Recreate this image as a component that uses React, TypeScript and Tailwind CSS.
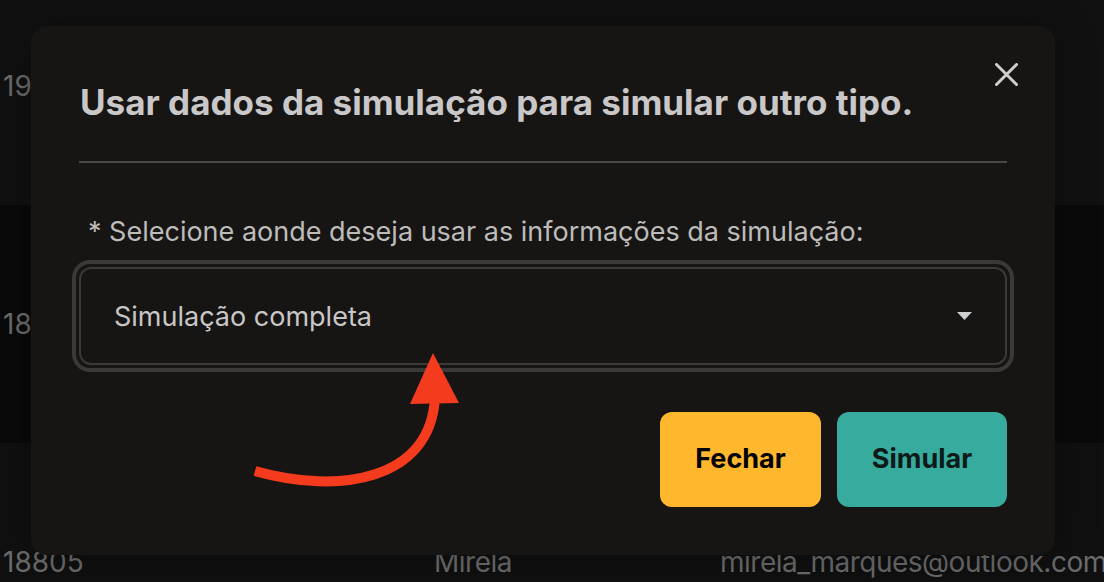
import React from "react";

const rows = [
  { id: "19", name: "", email: "", bg: "bg-[#111111]" },
  { id: "18", name: "", email: "", bg: "bg-[#0a0a0a]" },
  { id: "18805", name: "Mirela", email: "mirela_marques@outlook.com", bg: "bg-[#101010]" },
];

const CloseIcon = () => (
  <svg width="23" height="23" viewBox="0 0 23 23">
    <path d="M1.5 1.5 L21.5 21.5 M21.5 1.5 L1.5 21.5" stroke="#cfcfcf" strokeWidth="3" strokeLinecap="round" />
  </svg>
);

const CurvedArrow = () => (
  <svg width="230" height="150" viewBox="0 0 230 150" className="absolute left-[230px] top-[340px]">
    <path d="M25 131 C 110 155, 200 140, 205 58" fill="none" stroke="#f53b1e" strokeWidth="10" />
    <polygon points="203,13 180,64 229,63" fill="#f53b1e" />
  </svg>
);

const App = () => {
  return (
    <div className="relative w-[1104px] h-[582px] overflow-hidden bg-[#0d0d0d] font-['Inter',sans-serif]">
      {/* background table */}
      <div className="flex flex-col mt-[-33px]">
        {rows.map((r) => (
          <div key={r.id} className={`flex h-[238px] items-center ${r.bg} text-[28px] text-[#6c6c6c]`}>
            <span className="w-[434px] shrink-0 pl-[3px]">{r.id}</span>
            <span className="w-[286px] shrink-0 tracking-[-0.5px]">{r.name}</span>
            <span className="shrink-0 whitespace-nowrap tracking-[-0.5px]">{r.email}</span>
          </div>
        ))}
      </div>

      {/* modal */}
      <div className="absolute left-[31px] top-[26px] w-[1024px] h-[529px] rounded-2xl bg-[#161514] px-[48px] pt-[59px] shadow-[0_0_40px_rgba(0,0,0,0.35)]">
        <button className="absolute right-[37px] top-[37px]">
          <CloseIcon />
        </button>
        <h2 className="text-[35px] font-bold leading-none text-[#c9c7c7] pl-[1px]">
          Usar dados da simulação para simular outro tipo.
        </h2>
        <div className="mt-[41px] h-[2px] bg-[#494846]" />
        <p className="mt-[55px] pl-[9px] text-[27px] leading-none text-[#bdbcbb]">
          * Selecione aonde deseja usar as informações da simulação:
        </p>
        <div className="mt-[15px] -mx-[7px] rounded-[18px] border-[4px] border-[#3a3938] p-[3px]">
          <div className="flex h-[98px] items-center justify-between rounded-[12px] border-2 border-[#3a3938] pl-[33px] pr-[33px]">
            <span className="text-[27px] leading-none text-[#c9c7c6]">Simulação completa</span>
            <svg width="15" height="8" viewBox="0 0 15 8">
              <polygon points="0,0 15,0 7.5,8" fill="#cfcfcf" />
            </svg>
          </div>
        </div>
        <div className="mt-[40px] flex justify-end gap-[16px]">
          <button className="h-[95px] w-[161px] rounded-[12px] bg-[#ffb82e] text-[27px] font-bold text-black">
            Fechar
          </button>
          <button className="h-[95px] w-[170px] rounded-[12px] bg-[#38ab9f] text-[27px] font-bold text-[#0d1a18]">
            Simular
          </button>
        </div>
      </div>
      <CurvedArrow />
    </div>
  );
};

export default App;
